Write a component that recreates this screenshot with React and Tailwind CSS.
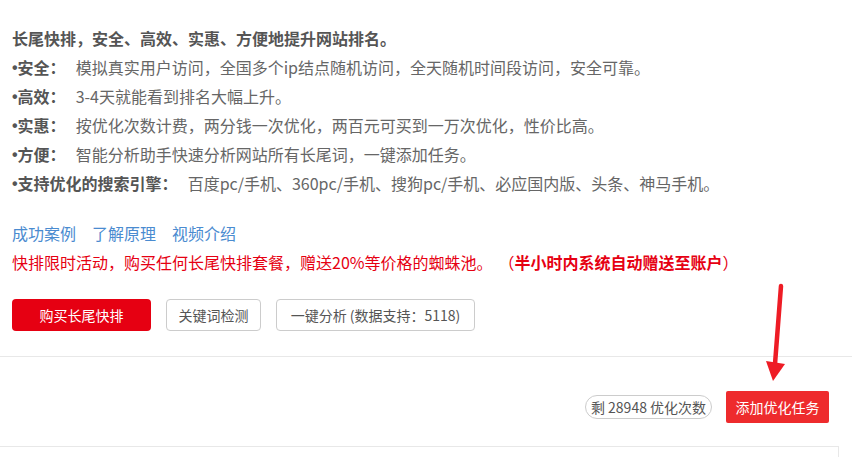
const features = [
  { label: '安全：', text: '模拟真实用户访问，全国多个ip结点随机访问，全天随机时间段访问，安全可靠。' },
  { label: '高效：', text: '3-4天就能看到排名大幅上升。' },
  { label: '实惠：', text: '按优化次数计费，两分钱一次优化，两百元可买到一万次优化，性价比高。' },
  { label: '方便：', text: '智能分析助手快速分析网站所有长尾词，一键添加任务。' },
  { label: '支持优化的搜索引擎：', text: '百度pc/手机、360pc/手机、搜狗pc/手机、必应国内版、头条、神马手机。' },
];

export default function App() {
  return (
    <div
      className="relative h-[457px] w-[860px] overflow-hidden bg-white"
      style={{ fontFamily: '"Noto Sans CJK SC", "Noto Sans", sans-serif' }}
    >
      <div className="w-[852px]">
        {/* Intro */}
        <div className="px-3 pt-[24px] text-[16px] leading-[29px]">
          <p className="font-bold text-[#555]">长尾快排，安全、高效、实惠、方便地提升网站排名。</p>
          {features.map((f) => (
            <p key={f.label} className="flex h-[29px] items-center text-[#666]">
              <span className="mr-[10px] flex items-center font-bold text-[#555]">
                <span className="font-['Liberation_Sans',sans-serif] leading-none">•</span>
                {f.label}
              </span>
              <span>{f.text}</span>
            </p>
          ))}

          <div className="mt-[21px] flex gap-4 text-[#4a8bd0]">
            <span>成功案例</span>
            <span>了解原理</span>
            <span>视频介绍</span>
          </div>
          <p className="text-[#e60012]">
            快排限时活动，购买任何长尾快排套餐，赠送20%等价格的蜘蛛池。
            <span className="ml-[14px]">
              （<span className="font-bold">半小时内系统自动赠送至账户</span>）
            </span>
          </p>

          <div className="mt-[22px] flex gap-[15px] text-[14px]">
            <button type="button" className="h-8 w-[139px] rounded-[4px] bg-[#e60012] text-white">
              购买长尾快排
            </button>
            <button type="button" className="h-8 w-[95px] rounded-[4px] border border-[#ccc] text-[#555]">
              关键词检测
            </button>
            <button type="button" className="h-8 w-[199px] rounded-[4px] border border-[#ccc] text-[#555]">
              一键分析 (数据支持：5118)
            </button>
          </div>
        </div>

        {/* Task bar */}
        <div className="mt-[25px] border-t border-[#e8e8e8]">
          <div className="flex items-center justify-end gap-[14px] pt-[34px] pr-[23px] text-[14px]">
            <span className="flex h-6 w-[127px] items-center justify-center rounded-full border border-[#ccc] text-[#555]">
              剩 28948 优化次数
            </span>
            <button type="button" className="h-8 w-[103px] rounded-[2px] bg-[#ee2b2d] text-white">
              添加优化任务
            </button>
          </div>
          <div className="mt-[23px] mr-[13px] -ml-px h-[40px] border border-[#e8e8e8]" />
        </div>
      </div>

      {/* Annotation arrow */}
      <svg className="absolute left-0 top-0" width="860" height="457" viewBox="0 0 860 457">
        <line x1="781" y1="286" x2="775" y2="364" stroke="#ee1c25" strokeWidth="4.5" strokeLinecap="round" />
        <polygon points="766,361 785,364 773,381" fill="#ee1c25" />
      </svg>
    </div>
  );
}
